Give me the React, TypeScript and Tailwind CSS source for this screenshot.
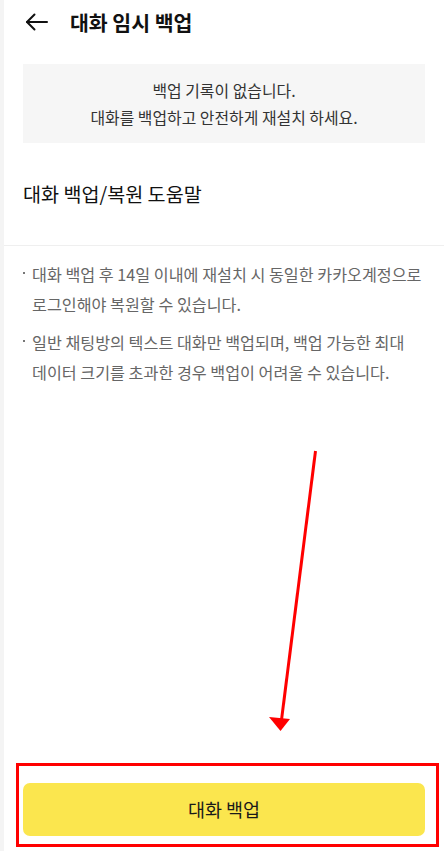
import React from 'react';

const font = { fontFamily: '"Noto Sans CJK KR", "Noto Sans", sans-serif' };

function BackArrow() {
  return (
    <svg width="24" height="24" viewBox="0 0 24 24" fill="none" stroke="#111" strokeWidth="2" strokeLinecap="round" strokeLinejoin="round">
      <path d="M22 12H2" />
      <path d="M9.5 4.5L2 12l7.5 7.5" />
    </svg>
  );
}

const notes = [
  ['대화 백업 후 14일 이내에 재설치 시 동일한 카카오계정으로', '로그인해야 복원할 수 있습니다.'],
  ['일반 채팅방의 텍스트 대화만 백업되며, 백업 가능한 최대', '데이터 크기를 초과한 경우 백업이 어려울 수 있습니다.'],
];

export default function App() {
  return (
    <div className="relative flex h-[851px] w-full overflow-hidden bg-white" style={font}>
      {/* left edge strip */}
      <div className="w-[4px] shrink-0 bg-[#f4f4f4]" />

      <div className="flex flex-1 flex-col">
        {/* Header */}
        <div className="flex h-[44px] items-center pl-[21px]">
          <BackArrow />
          <h1 className="ml-[21px] text-[20.5px] font-bold leading-none text-[#111]">대화 임시 백업</h1>
        </div>

        {/* Empty state */}
        <div className="mx-[19px] mt-[20px] flex h-[79px] flex-col items-center justify-center bg-[#f6f6f6] text-[15.9px] leading-[27px] text-[#333]">
          <p>백업 기록이 없습니다.</p>
          <p>대화를 백업하고 안전하게 재설치 하세요.</p>
        </div>

        {/* Help heading */}
        <div className="flex h-[102px] items-center px-[19px]">
          <h2 className="text-[19.6px] leading-[26px] text-[#111]">대화 백업/복원 도움말</h2>
        </div>
        <div className="h-px bg-[#efefef]" />

        {/* Notes */}
        <div className="flex flex-col gap-[8px] px-[19px] pt-[13px]">
          {notes.map((lines, i) => (
            <div key={i} className="flex text-[16.2px] leading-[30px] text-[#666]">
              <span className="relative w-[9px] shrink-0">
                <span className="absolute left-0 top-[13px] h-[2px] w-[2px] bg-[#777]" />
              </span>
              <p className="whitespace-nowrap">
                {lines[0]}
                <br />
                {lines[1]}
              </p>
            </div>
          ))}
        </div>

        <div className="flex-1" />

        {/* Bottom action */}
        <div className="px-[19px] pb-[15px]">
          <button className="flex h-[53px] w-full items-center justify-center rounded-[7px] bg-[#fbe64e] text-[18.5px] text-[#1a1a1a]">
            대화 백업
          </button>
        </div>
      </div>

      {/* annotation overlay */}
      <div className="pointer-events-none absolute left-[16px] top-[763px] h-[84px] w-[423px] border-[3px] border-[#ff0000]" />
      <svg className="pointer-events-none absolute left-0 top-0" width="444" height="851" viewBox="0 0 444 851">
        <line x1="315.5" y1="451" x2="281.5" y2="720" stroke="#ff0000" strokeWidth="3" />
        <polygon points="269,717 290,719 280.5,731" fill="#ff0000" />
      </svg>
    </div>
  );
}
